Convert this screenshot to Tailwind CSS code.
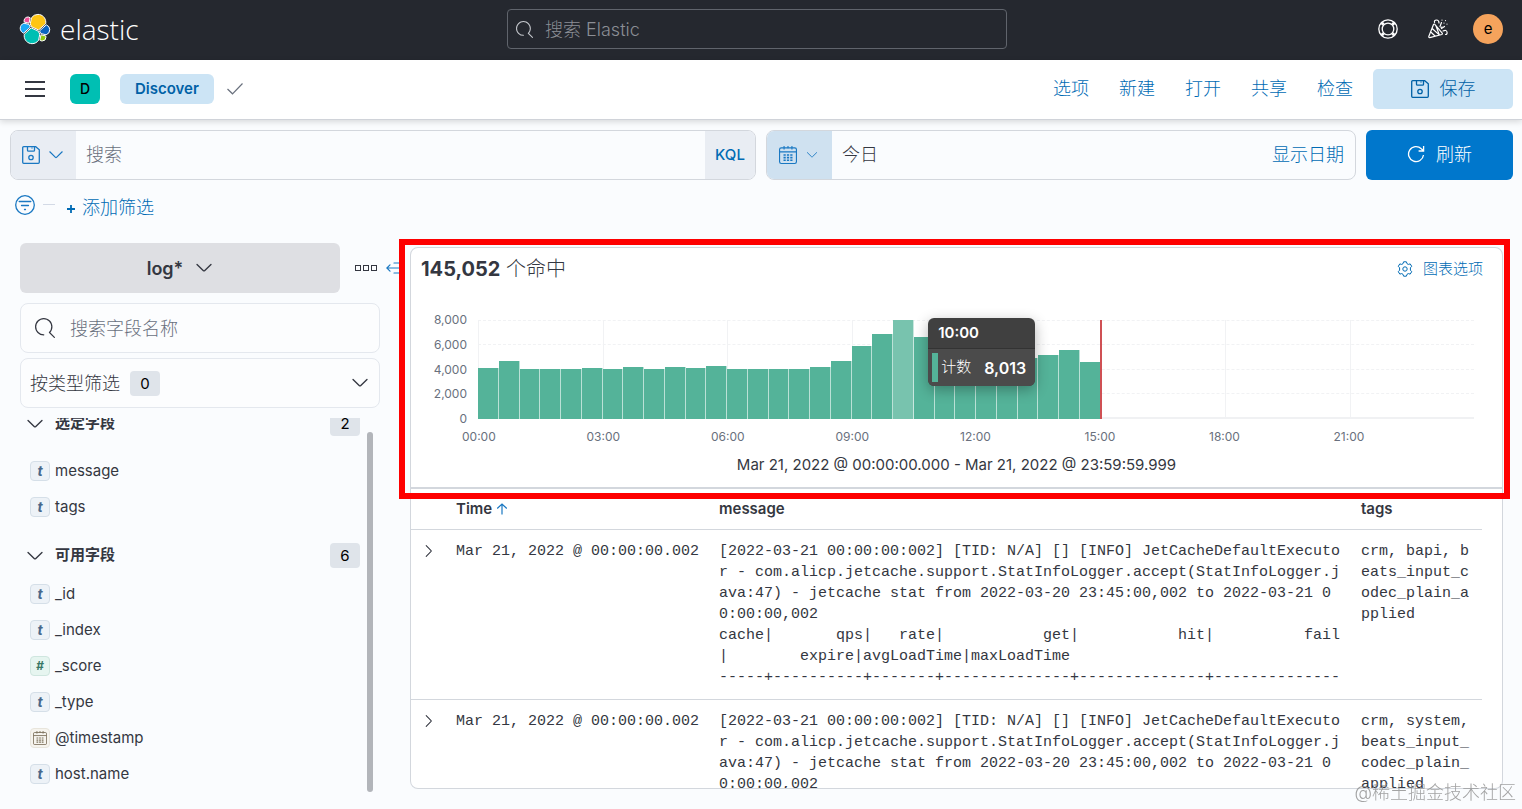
<!DOCTYPE html>
<html lang="zh-CN">
<head>
    <meta charset="UTF-8">
    <meta name="viewport" content="width=device-width, initial-scale=1.0">
    <title>Discover - Elastic</title>
    <script src="https://cdn.jsdelivr.net/npm/@tailwindcss/browser@4"></script>
</head>
<body class="h-screen overflow-hidden flex flex-col bg-[#fafcfe] text-[#343741] font-[Inter,'Noto_Sans_CJK_SC',sans-serif]">

    <!-- Icons -->
    <svg class="hidden">
        <symbol id="i-search" viewBox="0 0 16 16"><path fill="currentColor" d="M11.271 11.978l3.872 3.873a.502.502 0 00.708 0 .502.502 0 000-.708l-3.565-3.564c2.38-2.747 2.267-6.923-.342-9.532-2.73-2.73-7.17-2.73-9.898 0-2.728 2.729-2.728 7.17 0 9.9a6.955 6.955 0 004.949 2.05.5.5 0 000-1 5.96 5.96 0 01-4.242-1.757 6.01 6.01 0 010-8.486 6.004 6.004 0 018.484 0 6.01 6.01 0 010 8.486.5.5 0 00.034.738z"/></symbol>
        <symbol id="i-down" viewBox="0 0 16 16"><path fill="none" stroke="currentColor" stroke-width="1.2" stroke-linecap="round" stroke-linejoin="round" d="M1.8 4.800l5.700 5.600q.5.4 1 0l5.700-5.600"/></symbol>
        <symbol id="i-save" viewBox="0 0 18 18"><g fill="none" stroke="currentColor" stroke-width="1.300"><path d="M1.700.7h12l3.600 3v12.600a1 1 0 01-1 1H1.700a1 1 0 01-1-1V1.700a1 1 0 011-1z"/><path d="M5.500.7v3.500a1 1 0 001 1h5a1 1 0 001-1V.7M10 1.500v1"/><circle cx="9" cy="11.500" r="2.200"/></g></symbol>
        <symbol id="i-calendar" viewBox="0 0 16 16"><g fill="none" stroke="currentColor"><rect x=".5" y="1.7" width="15" height="13.8" rx="1.5"/><path d="M.5 5.200h15M4.500 0v3M8 0v2M11.500 0v3"/><path stroke-dasharray="2 1" stroke-width="1.4" d="M4 8h8M4 10.300h8M4 12.600h8"/></g></symbol>
    </svg>

    <!-- Top bar -->
    <header class="h-[60px] shrink-0 grid grid-cols-[1fr_500px_1fr] items-center bg-[#25282f] pl-[19px] pr-[27px] pb-[2px]">
        <a href="#" class="flex items-center gap-[9px]" aria-label="Elastic">
            <svg class="w-8 h-8" viewBox="0 0 32 32" stroke="#fff" stroke-width="1">
                <path fill="#FEC514" d="M12.58 13.787l7.002 3.211 7.066-6.213a7.849 7.849 0 00.152-1.557c0-4.328-3.525-7.852-7.852-7.852a7.88 7.88 0 00-6.496 3.437l-1.176 6.09 1.304 2.884z"/>
                <path fill="#00BFB3" d="M5.333 21.215A7.93 7.93 0 005.18 22.8c0 4.344 3.54 7.878 7.895 7.878 2.616 0 5.06-1.291 6.537-3.464l1.164-6.09-1.556-2.977-7.028-3.204-6.86 6.272z"/>
                <path fill="#F04E98" d="M5.288 9.067l4.8 1.132L11.14 4.76a3.792 3.792 0 00-6.07 3.027c0 .443.076.87.218 1.28z"/>
                <path fill="#1BA9F5" d="M4.872 10.213c-2.14.709-3.644 2.767-3.644 5.018 0 2.195 1.359 4.154 3.395 4.927l6.73-6.09-1.234-2.64-5.247-1.215z"/>
                <path fill="#93C90E" d="M20.873 27.21a3.78 3.78 0 002.276.773 3.794 3.794 0 003.794-3.793c0-.457-.077-.887-.213-1.28l-4.79-1.115-1.067 5.415z"/>
                <path fill="#0B64C0" d="M21.848 20.562l5.28 1.23a5.344 5.344 0 003.638-5.033 5.272 5.272 0 00-3.388-4.905l-6.904 6.045 1.374 2.663z"/>
            </svg>
            <span class="text-[28px] leading-8 text-white font-light font-['Open_Sans',sans-serif]">elastic</span>
        </a>
        <label class="h-10 flex items-center gap-3 px-2 rounded border border-[#60646c] text-[#9a9da3]">
            <svg class="w-[17px] h-[17px] shrink-0 text-[#c5c8cd]"><use href="#i-search"/></svg>
            <input type="text" placeholder="搜索 Elastic" aria-label="搜索 Elastic" class="w-full bg-transparent outline-none text-[18px] font-light placeholder:text-[#8b8e95]">
        </label>
        <div class="flex items-center justify-end gap-[30px] -mr-2">
            <button aria-label="帮助">
                <svg class="w-5 h-5 text-white" viewBox="0 0 20 20" fill="none" stroke="currentColor" stroke-width="1.3"><circle cx="10" cy="10" r="9.2"/><circle cx="10" cy="10" r="5.8"/><path stroke-width="3" d="M3.700 3.700l2 2M16.300 3.700l-2 2M3.700 16.300l2-2M16.300 16.300l-2-2"/></svg>
            </button>
            <button aria-label="新增功能">
                <svg class="w-5 h-5 text-white" viewBox="0 0 20 20" fill="none" stroke="currentColor" stroke-width="1.2" stroke-linecap="round" stroke-linejoin="round"><path d="M5.500 5.500L.8 17.500q-.2 1.200 1 1.100l12-3.100q1-.5.400-1.400L6.800 5.300q-.8-.7-1.300.2zM4.200 9.500l7 6.400M2.800 13l4.200 4M8 7l3 8M6.500 3.500Q6 1 8.500 1T11 4M12 7.500l1.500-4M13.500 9.500l3-2M15 12q3.500-1.500 4 1t-1.500 2.500"/><path d="M14 1v.1M17.500 1.500v.1M16 4v.1M19 5v.1M13 8.500l1-.5"/></svg>
            </button>
            <button class="w-[30px] h-[30px] -ml-[5px] rounded-full bg-[#f5a35c] text-black text-[15px] leading-5">e</button>
        </div>
    </header>

    <!-- Navigation bar -->
    <nav class="relative h-[60px] shrink-0 flex items-center pl-[25px] pr-[9px] pb-[2px] bg-white border-b border-[#d0d3d9] shadow-[0_2px_6px_rgba(0,0,0,0.14)]">
        <button aria-label="菜单" class="w-5 h-4 flex flex-col justify-between">
            <span class="h-[2px] w-full bg-[#343741]"></span>
            <span class="h-[2px] w-full bg-[#343741]"></span>
            <span class="h-[2px] w-full bg-[#343741]"></span>
        </button>
        <button class="ml-[25px] w-[30px] h-[30px] rounded-md bg-[#00bfb3] text-black text-[14px] font-medium">D</button>
        <a href="#" class="ml-5 h-[30px] px-[15px] rounded-md bg-[#cce4f5] text-[#0061a6] text-[15px] leading-[30px] font-semibold">Discover</a>
        <svg class="ml-[13px] w-4 h-4 text-[#69707d]" viewBox="0 0 16 16" fill="none" stroke="currentColor" stroke-width="1.2"><path d="M.5 8l5 4.800L15.500 2.500"/></svg>
        <div class="ml-auto flex items-center gap-[30px] text-[18px] font-light text-[#006bb4]">
            <a href="#">选项</a>
            <a href="#">新建</a>
            <a href="#">打开</a>
            <a href="#">共享</a>
            <a href="#">检查</a>
        </div>
        <button class="ml-5 w-[140px] h-10 flex items-center justify-center gap-[11px] rounded-[5px] bg-[#cce4f5] text-[#0061a6] text-[18px] font-light">
            <svg class="w-[18px] h-[18px]"><use href="#i-save"/></svg>
            保存
        </button>
    </nav>

    <!-- Query bar -->
    <div class="shrink-0 grid grid-cols-[746fr_590fr_147px] gap-[10px] pt-[10px] pl-[10px] pr-[9px]">
        <div class="h-[50px] flex rounded-lg border border-[#d3d7dd] overflow-hidden">
            <button aria-label="已保存查询" class="w-[65px] shrink-0 flex items-center justify-center gap-2 pr-[2px] bg-[#e9edf3] text-[#1a78c2]">
                <svg class="w-[18px] h-[18px]"><use href="#i-save"/></svg>
                <svg class="w-4 h-4"><use href="#i-down"/></svg>
            </button>
            <input type="text" placeholder="搜索" aria-label="搜索" class="flex-1 px-[10px] pb-[2px] bg-transparent outline-none text-[18px] font-light placeholder:text-[#69707d]">
            <button class="w-[50px] bg-[#e9edf3] text-[#006bb4] text-[15px] font-medium">KQL</button>
        </div>
        <div class="h-[50px] flex items-center rounded-lg border border-[#d3d7dd] overflow-hidden text-[18px] font-light">
            <button aria-label="日期快速选择" class="w-[65px] h-full shrink-0 flex items-center justify-center gap-[9px] pr-[3px] bg-[#cfe1f0] text-[#1a78c2]">
                <svg class="w-[18px] h-[18px]"><use href="#i-calendar"/></svg>
                <svg class="w-3 h-3"><use href="#i-down"/></svg>
            </button>
            <button class="flex-1 px-[10px] pb-[2px] text-left">今日</button>
            <button class="px-[11px] pb-[2px] text-[#006bb4]">显示日期</button>
        </div>
        <button class="h-[50px] flex items-center justify-center gap-[11px] pb-[2px] rounded-md bg-[#0077cc] text-white text-[18px] font-light">
            <svg class="w-[18px] h-[18px]" viewBox="0 0 18 18" fill="none" stroke="currentColor" stroke-width="1.300"><path d="M16.500 10a7.500 7.500 0 11-2.200-6.300l2.200 2M16.600 1v5h-5"/></svg>
            刷新
        </button>
    </div>

    <!-- Filter bar -->
    <div class="h-[63px] shrink-0 flex items-center pl-[15px]">
        <button aria-label="筛选选项" class="-mt-[14px]">
            <svg class="w-5 h-5 text-[#1a78c2]" viewBox="0 0 20 20" fill="none" stroke="currentColor" stroke-width="1.3" stroke-linecap="round"><circle cx="10" cy="10" r="9.300"/><path d="M4.200 6.500h11.600M6.500 10.500h7M9.500 14.500h1"/></svg>
        </button>
        <span class="ml-2 -mt-[14px] w-3 h-px bg-[#d3dae6]"></span>
        <button class="ml-[11px] -mt-2 flex items-center gap-[6px] text-[#006bb4]">
            <svg class="w-[10px] h-[10px] mt-[3px]" viewBox="0 0 10 10" stroke="currentColor" stroke-width="1.800"><path d="M5 1v8M1 5h8"/></svg>
            <span class="text-[18px] font-light">添加筛选</span>
        </button>
    </div>

    <div class="flex-1 min-h-0 flex">
        <!-- Field list -->
        <aside class="w-[380px] shrink-0 pl-5 pb-[17px] flex flex-col">
            <div class="flex items-center">
                <button class="w-[320px] h-[50px] flex items-center justify-center gap-3 rounded-md bg-[#dedfe3] text-[18px] font-semibold">
                    log*
                    <svg class="w-[18px] h-[18px]"><use href="#i-down"/></svg>
                </button>
                <button aria-label="更多" class="ml-[15px] flex gap-[2px]">
                    <span class="w-[6px] h-[6px] border border-[#343741]"></span>
                    <span class="w-[6px] h-[6px] border border-[#343741]"></span>
                    <span class="w-[6px] h-[6px] border border-[#343741]"></span>
                </button>
            </div>
            <label class="mt-[10px] h-[50px] shrink-0 flex items-center gap-[15px] px-[14px] rounded-lg border border-[#e4e8ee] bg-[#fcfdfe]">
                <svg class="w-5 h-5 shrink-0"><use href="#i-search"/></svg>
                <input type="search" placeholder="搜索字段名称" aria-label="搜索字段名称" class="w-full bg-transparent outline-none text-[18px] font-light placeholder:text-[#69707d]">
            </label>
            <button class="mt-[5px] h-[50px] shrink-0 flex items-center px-[9px] rounded-lg border border-[#e4e8ee] bg-[#fcfdfe] text-[18px] font-light">
                按类型筛选
                <span class="ml-[10px] w-[30px] h-[25px] rounded bg-[#dfe4ea] text-black text-[15px] leading-[25px] font-normal">0</span>
                <svg class="ml-auto mr-[1px] w-[18px] h-[18px]"><use href="#i-down"/></svg>
            </button>
            <div class="mt-[10px] flex-1 min-h-0 flex overflow-hidden pr-[7px]">
                <div class="flex-1 -mt-[7px] pl-[6px] text-[15px]">
                    <button class="w-full h-[25px] flex items-center text-left font-bold">
                        <svg class="w-[18px] h-[18px] mr-[11px]"><use href="#i-down"/></svg>
                        选定字段
                        <span class="ml-auto mr-[7px] w-[30px] h-[25px] rounded bg-[#dfe4ea] text-black text-center leading-[25px] font-normal">2</span>
                    </button>
                    <ul class="mt-[17px] pl-1" id="selected-fields"></ul>
                    <button class="mt-[18px] w-full h-[25px] flex items-center text-left font-bold">
                        <svg class="w-[18px] h-[18px] mr-[11px]"><use href="#i-down"/></svg>
                        可用字段
                        <span class="ml-auto mr-[7px] w-[30px] h-[25px] rounded bg-[#dfe4ea] text-black text-center leading-[25px] font-normal">6</span>
                    </button>
                    <ul class="mt-2 pl-1" id="available-fields"></ul>
                </div>
                <div class="mt-[14px] w-[6px] rounded-full bg-[#b2b5ba]"></div>
            </div>
        </aside>

        <button aria-label="折叠侧边栏" class="w-[30px] h-[50px] shrink-0 pl-[6px] text-[#1a78c2]">
            <svg class="w-4 h-4" viewBox="0 0 16 16" fill="none" stroke="currentColor" stroke-width="1.2" stroke-linecap="round"><path d="M.8 8H13M4 4.800L.8 8 4 11.200M8 3h6M8 13h6"/></svg>
        </button>

        <main class="flex-1 min-w-0 mt-1 mb-5 mr-[19px] flex flex-col">
            <!-- Histogram -->
            <section class="relative h-[242px] shrink-0 px-[10px] pt-[6px] bg-white border-x border-t border-b-2 border-[#d3d7dd] rounded-t-lg">
                <div class="flex items-center justify-between pr-[9px]">
                    <h2 class="text-[20px] leading-[30px] font-light"><strong class="font-bold">145,052</strong> 个命中</h2>
                    <button class="flex items-center gap-[10px] text-[15px] font-light text-[#006bb4]">
                        <svg class="w-4 h-4" viewBox="0 0 16 16" fill="none" stroke="currentColor"><path d="M6.600.8h2.800l.6 1.900 1.300.7 1.900-.5 1.500 2.400-1.300 1.500v2.400l1.300 1.500-1.500 2.400-1.900-.5-1.300.7-.6 1.900H6.600L6 13.300l-1.300-.7-1.900.5-1.500-2.400 1.300-1.500V6.800L1.300 5.300l1.500-2.400 1.900.5L6 2.700z"/><circle cx="8" cy="8" r="2.200"/></svg>
                        图表选项
                    </button>
                </div>
                <div class="mt-7 flex text-[12px] text-[#69707d]">
                    <div class="w-[46px] h-[115px] flex flex-col justify-between text-right leading-4">
                        <span>8,000</span>
                        <span>6,000</span>
                        <span>4,000</span>
                        <span>2,000</span>
                        <span>0</span>
                    </div>
                    <div class="flex-1 ml-[11px] mr-[18px] pt-2">
                        <div class="relative h-[99px] border-b-2 border-[#f0f1f3]">
                            <div class="absolute inset-0 flex flex-col">
                                <div class="flex-1 border-t border-dashed border-[#f1f2f4]"></div>
                                <div class="flex-1 border-t border-dashed border-[#f1f2f4]"></div>
                                <div class="flex-1 border-t border-dashed border-[#f1f2f4]"></div>
                                <div class="flex-1 border-t border-dashed border-[#f1f2f4]"></div>
                            </div>
                            <div class="absolute inset-0 grid grid-cols-8">
                                <div class="border-l border-[#f1f2f4]"></div>
                                <div class="border-l border-[#f1f2f4]"></div>
                                <div class="border-l border-[#f1f2f4]"></div>
                                <div class="border-l border-[#f1f2f4]"></div>
                                <div class="border-l border-[#f1f2f4]"></div>
                                <div class="border-l border-[#f1f2f4]"></div>
                                <div class="border-l border-[#f1f2f4]"></div>
                                <div class="border-l border-[#f1f2f4]"></div>
                            </div>
                            <div id="bars" class="absolute -bottom-[2px] top-0 inset-x-0 grid grid-cols-[repeat(48,minmax(0,1fr))] items-end"></div>
                            <div class="absolute left-[62.5%] top-0 -bottom-[2px] -ml-[1px] w-[2px] bg-[#cf5054]"></div>

                            <!-- Tooltip -->
                            <div class="absolute left-[45%] -top-[2px] ml-[2px] w-[107px] rounded-md bg-[#404040] text-white overflow-hidden shadow-[0_4px_14px_rgba(0,0,0,0.3)]">
                                <div class="h-[31px] px-[10px] text-[15px] leading-[30px] font-semibold border-b border-[#333]">10:00</div>
                                <div class="h-[37px] p-1 flex items-center text-[15px] bg-[#4b4b4b]">
                                    <span class="w-[6px] h-full bg-[#54b399] mr-[3px]"></span>
                                    <span class="font-light">计数</span>
                                    <span class="ml-auto mr-[5px] text-[16px] font-semibold">8,013</span>
                                </div>
                            </div>
                        </div>
                        <div class="grid grid-cols-8 pt-[10px] leading-4">
                            <span class="-ml-4">00:00</span>
                            <span class="-ml-4">03:00</span>
                            <span class="-ml-4">06:00</span>
                            <span class="-ml-4">09:00</span>
                            <span class="-ml-4">12:00</span>
                            <span class="-ml-4">15:00</span>
                            <span class="-ml-4">18:00</span>
                            <span class="-ml-4">21:00</span>
                        </div>
                    </div>
                </div>
                <p class="mt-[10px] text-center text-[15px] leading-5">Mar 21, 2022 @ 00:00:00.000 - Mar 21, 2022 @ 23:59:59.999</p>
                <!-- Highlight frame -->
                <div class="absolute z-10 -left-[12px] -right-[8px] -top-[9px] -bottom-[12px] border-[6px] border-[#fe0000] pointer-events-none"></div>
            </section>

            <!-- Documents -->
            <section class="flex-1 min-h-0 overflow-hidden bg-white border-x border-b border-[#d3d7dd] rounded-b-lg pr-5">
                <table class="w-full table-fixed text-left">
                    <colgroup>
                        <col class="w-[35px]">
                        <col class="w-[263px]">
                        <col>
                        <col class="w-[131px]">
                    </colgroup>
                    <thead>
                        <tr class="h-10 text-[15px] leading-5 border-b border-[#d3d7dd]">
                            <th aria-label="展开"></th>
                            <th class="px-[10px] font-semibold">
                                <button class="flex items-center gap-1">Time
                                    <svg class="w-3 h-3 text-[#1a78c2]" viewBox="0 0 12 12" fill="none" stroke="currentColor" stroke-width="1.2"><path d="M6 11.500V1.200M1.200 5.500L6 1l4.800 4.500"/></svg>
                                </button>
                            </th>
                            <th class="px-[10px] font-semibold">message</th>
                            <th class="px-[10px] font-semibold">tags</th>
                        </tr>
                    </thead>
                    <tbody class="align-top text-[15px] leading-[21px] font-['Liberation_Mono',monospace] whitespace-pre">
                        <tr class="border-b border-[#d3d7dd]">
                            <td class="py-[11px] pl-[11px]"><button aria-label="展开行" class="block py-[3px]"><svg class="w-[14px] h-[14px] -rotate-90"><use href="#i-down"/></svg></button></td>
                            <td class="py-[11px] px-[10px]">Mar 21, 2022 @ 00:00:00.002</td>
                            <td class="py-[11px] px-[10px]">[2022-03-21 00:00:00:002] [TID: N/A] [] [INFO] JetCacheDefaultExecuto
r - com.alicp.jetcache.support.StatInfoLogger.accept(StatInfoLogger.j
ava:47) - jetcache stat from 2022-03-20 23:45:00,002 to 2022-03-21 0
0:00:00,002
cache|       qps|   rate|           get|           hit|          fail
|        expire|avgLoadTime|maxLoadTime
-----+----------+-------+--------------+--------------+--------------</td>
                            <td class="py-[11px] px-[10px]">crm, bapi, b
eats_input_c
odec_plain_a
pplied</td>
                        </tr>
                        <tr>
                            <td class="py-[11px] pl-[11px]"><button aria-label="展开行" class="block py-[3px]"><svg class="w-[14px] h-[14px] -rotate-90"><use href="#i-down"/></svg></button></td>
                            <td class="py-[11px] px-[10px]">Mar 21, 2022 @ 00:00:00.002</td>
                            <td class="py-[11px] px-[10px]">[2022-03-21 00:00:00:002] [TID: N/A] [] [INFO] JetCacheDefaultExecuto
r - com.alicp.jetcache.support.StatInfoLogger.accept(StatInfoLogger.j
ava:47) - jetcache stat from 2022-03-20 23:45:00,002 to 2022-03-21 0
0:00:00,002</td>
                            <td class="py-[11px] px-[10px]">crm, system,
beats_input_
codec_plain_
applied</td>
                        </tr>
                    </tbody>
                </table>
            </section>
        </main>
    </div>

    <p class="fixed right-[6px] bottom-[4px] text-[18px] leading-6 font-light text-[#8c8c8c]/80">@稀土掘金技术社区</p>

    <script>
        // Field type badges
        const badges = {
            string: '<span class="w-5 h-5 rounded border border-[#d5dfe8] bg-[#edf2f7] text-[#47688a] text-center text-[14px] leading-[17px] font-bold italic font-[\'Liberation_Serif\',serif]">t</span>',
            number: '<span class="w-5 h-5 rounded border border-[#cfe6df] bg-[#e6f5f0] text-[#387765] text-center text-[12px] leading-[18px] font-bold italic">#</span>',
            date: '<span class="w-5 h-5 rounded border border-[#e8e5dc] bg-[#f6f4ee] text-[#7b705a] flex items-center justify-center"><svg class="w-[14px] h-[14px]"><use href="#i-calendar"/></svg></span>'
        };

        function renderFields(id, fields) {
            document.getElementById(id).innerHTML = fields.map(([name, type]) =>
                `<li class="h-9 flex items-center gap-[5px]">${badges[type]}<a href="#">${name}</a></li>`
            ).join('');
        }

        renderFields('selected-fields', [['message', 'string'], ['tags', 'string']]);
        renderFields('available-fields', [
            ['_id', 'string'], ['_index', 'string'], ['_score', 'number'],
            ['_type', 'string'], ['@timestamp', 'date'], ['host.name', 'string']
        ]);

        // Hits per 30 minutes
        const counts = [
            4120, 4666, 4070, 4070, 4070, 4120, 4070, 4230, 4070, 4170,
            4120, 4280, 4070, 4070, 4070, 4070, 4210, 4690, 5910, 6860,
            8013, 6590, 6300, 6100, 5800, 5400, 4970, 5160, 5560, 4640
        ];
        document.getElementById('bars').innerHTML = counts.map(count =>
            `<div class="${count === 8013 ? 'bg-[#78c3ae] border-r border-white/60' : 'bg-[#54b399] border-r border-white/60'}" style="height: ${Math.min(count / 80, 100)}%"></div>`
        ).join('');
    </script>

</body>
</html>
